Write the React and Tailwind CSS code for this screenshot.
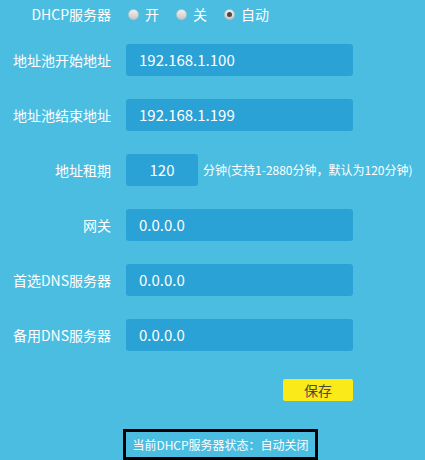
import React, { useState } from 'react';

const font = { fontFamily: '"Noto Sans CJK SC", "Noto Sans", sans-serif' };

const Radio = ({ checked, label, onClick }) => (
  <label className="flex items-center cursor-pointer" onClick={onClick}>
    <span className="w-[11px] h-[11px] rounded-full border border-[#b9c3c8] bg-gradient-to-b from-[#f0f0f0] to-[#c9c9c9] flex items-center justify-center">
      {checked && <span className="w-[5px] h-[5px] rounded-full bg-[#4a4a4a]" />}
    </span>
    <span className="ml-[6px] text-[14px] text-white">{label}</span>
  </label>
);

const Row = ({ label, value, narrow, hint }) => (
  <div className="flex items-center h-[32px]">
    <div className="w-[111px] text-right text-[14px] text-white">{label}</div>
    <div
      className={
        narrow
          ? 'ml-[15px] w-[72px] h-[32px] rounded-[3px] bg-[#2ba2d6] flex items-center justify-center text-[15px] text-white'
          : 'ml-[15px] w-[227px] h-[32px] rounded-[3px] bg-[#2ba2d6] flex items-center pl-[13px] text-[15px] text-white'
      }
    >
      {value}
    </div>
    {hint && <div className="ml-[5px] text-[12px] text-white whitespace-nowrap">{hint}</div>}
  </div>
);

const App = () => {
  const [mode, setMode] = useState('auto');

  return (
    <div className="w-[425px] h-[460px] bg-[#4bbde1] overflow-hidden" style={font}>
      <div className="flex items-center h-[28px]">
        <div className="w-[111px] text-right text-[14px] text-white">DHCP服务器</div>
        <div className="ml-[17px] flex items-center gap-[17px]">
          <Radio label="开" checked={mode === 'on'} onClick={() => setMode('on')} />
          <Radio label="关" checked={mode === 'off'} onClick={() => setMode('off')} />
          <Radio label="自动" checked={mode === 'auto'} onClick={() => setMode('auto')} />
        </div>
      </div>

      <div className="mt-[16px] flex flex-col gap-[23px]">
        <Row label="地址池开始地址" value="192.168.1.100" />
        <Row label="地址池结束地址" value="192.168.1.199" />
        <Row label="地址租期" value="120" narrow hint="分钟(支持1-2880分钟，默认为120分钟)" />
        <Row label="网关" value="0.0.0.0" />
        <Row label="首选DNS服务器" value="0.0.0.0" />
        <Row label="备用DNS服务器" value="0.0.0.0" />
      </div>

      <div className="mt-[28px] flex">
        <button className="ml-[283px] w-[70px] h-[22px] rounded-[2px] bg-[#fbea1a] text-[14px] text-[#4a4a3a] flex items-center justify-center">
          保存
        </button>
      </div>

      <div className="mt-[28px] ml-[123px] w-[195px] h-[31px] border-[3px] border-black flex items-center justify-center text-[12px] text-white">
        当前DHCP服务器状态：自动关闭
      </div>
    </div>
  );
};

export default App;
